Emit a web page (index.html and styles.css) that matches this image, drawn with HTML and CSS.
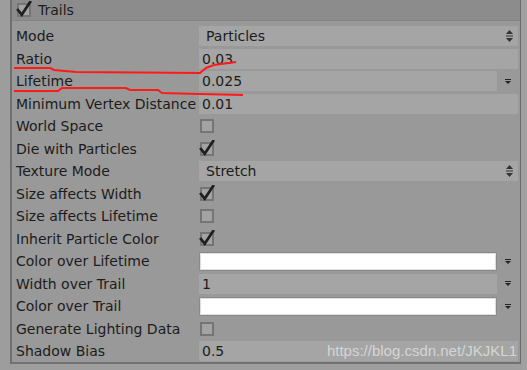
FILE: index.html
```html
<!DOCTYPE html>
<html lang="en">
<head>
    <meta charset="UTF-8">
    <title>Trails</title>
    <link rel="stylesheet" href="styles.css">
</head>
<body>
    <div class="inspector">
        <div class="gutter"></div>
        <div class="panel">
            <div class="header">
                <span class="check on"><svg viewBox="0 0 14 14"><path d="M1 7 L5 12 L13 0"/></svg></span>
                <span class="title">Trails</span>
            </div>
            <div class="rows">
                <div class="row"><span class="label">Mode</span><div class="field popup"><span>Particles</span><svg class="updown" viewBox="0 0 7 12"><path d="M3.5 0 L7 4 L0 4 Z M0 8 L7 8 L3.5 12 Z"/><rect x="0" y="5.5" width="7" height="1"/></svg></div></div>
                <div class="row"><span class="label">Ratio</span><div class="field num">0.03</div></div>
                <div class="row"><span class="label">Lifetime</span><div class="with-arrow"><div class="field num">0.025</div><svg class="arrow" viewBox="0 0 6 5"><rect width="6" height="1"/><path d="M0 2 L6 2 L3 5 Z"/></svg></div></div>
                <div class="row"><span class="label">Minimum Vertex Distance</span><div class="field num">0.01</div></div>
                <div class="row"><span class="label">World Space</span><span class="check"></span></div>
                <div class="row"><span class="label">Die with Particles</span><span class="check on"><svg viewBox="0 0 14 14"><path d="M1 7 L5 12 L13 0"/></svg></span></div>
                <div class="row"><span class="label">Texture Mode</span><div class="field popup"><span>Stretch</span><svg class="updown" viewBox="0 0 7 12"><path d="M3.5 0 L7 4 L0 4 Z M0 8 L7 8 L3.5 12 Z"/><rect x="0" y="5.5" width="7" height="1"/></svg></div></div>
                <div class="row"><span class="label">Size affects Width</span><span class="check on"><svg viewBox="0 0 14 14"><path d="M1 7 L5 12 L13 0"/></svg></span></div>
                <div class="row"><span class="label">Size affects Lifetime</span><span class="check"></span></div>
                <div class="row"><span class="label">Inherit Particle Color</span><span class="check on"><svg viewBox="0 0 14 14"><path d="M1 7 L5 12 L13 0"/></svg></span></div>
                <div class="row"><span class="label">Color over Lifetime</span><div class="with-arrow"><div class="field color"></div><svg class="arrow" viewBox="0 0 6 5"><rect width="6" height="1"/><path d="M0 2 L6 2 L3 5 Z"/></svg></div></div>
                <div class="row"><span class="label">Width over Trail</span><div class="with-arrow"><div class="field num">1</div><svg class="arrow" viewBox="0 0 6 5"><rect width="6" height="1"/><path d="M0 2 L6 2 L3 5 Z"/></svg></div></div>
                <div class="row"><span class="label">Color over Trail</span><div class="with-arrow"><div class="field color"></div><svg class="arrow" viewBox="0 0 6 5"><rect width="6" height="1"/><path d="M0 2 L6 2 L3 5 Z"/></svg></div></div>
                <div class="row"><span class="label">Generate Lighting Data</span><span class="check"></span></div>
                <div class="row"><span class="label">Shadow Bias</span><div class="field num">0.5</div></div>
            </div>
        </div>
        <div class="edge"></div>
    </div>

    <svg class="marks" viewBox="0 0 527 370">
        <polyline points="14,68 50,68 54,70 76,72 200,73 206,68 214,65 236,62"/>
        <polyline points="14,91 58,91 62,88 126,88 130,90 158,90 162,93 200,94 243,95"/>
    </svg>
    <div class="watermark">https://blog.csdn.net/JKJKL1</div>
</body>
</html>
```

FILE: styles.css
```css
* {
    box-sizing: border-box;
}
body {
    margin: 0;
    background-color: #9e9e9e;
    font-family: "DejaVu Sans", Verdana, sans-serif;
    font-size: 14px;
    color: #1c1c1c;
    overflow: hidden;
}
.inspector {
    display: flex;
    height: 370px;
}
.gutter {
    width: 10px;
    background-color: #9d9d9d;
}
.panel {
    width: 511px;
    height: 364px;
    background-color: #999999;
    border-left: 2px solid #6f6f6f;
    border-right: 1px solid #6a6a6a;
    border-bottom: 2px solid #727272;
}
.edge {
    flex: 1;
    background-color: #a0a0a0;
}
.header {
    height: 21px;
    display: flex;
    align-items: center;
    gap: 7px;
    padding-left: 5px;
    background-color: #8c8c8c;
    border-bottom: 1px solid #858585;
}
.rows {
    padding-top: 4px;
    padding-right: 2px;
}
.row {
    display: grid;
    grid-template-columns: 183px 1fr;
    align-items: center;
    height: 22.5px;
    padding-left: 4px;
}
.label {
    white-space: nowrap;
}
.field {
    height: 20px;
    display: flex;
    align-items: center;
    background-color: #a5a5a5;
    white-space: nowrap;
}
.num {
    padding-left: 3px;
}
.popup {
    justify-content: space-between;
    padding: 0 5px 0 7px;
}
.updown {
    width: 7px;
    height: 12px;
    fill: #333;
}
.with-arrow {
    display: flex;
    align-items: center;
}
.with-arrow .field {
    width: 298px;
}
.arrow {
    width: 6px;
    height: 5px;
    margin-left: 8px;
    fill: #222;
}
.color {
    height: 19px;
    background-color: #ffffff;
    border: 1px solid #8a8a8a;
    box-shadow: inset 0 0 0 1px #dedede;
}
.check {
    position: relative;
    width: 14px;
    height: 14px;
    border: 2px solid #757575;
    background-color: #a3a3a3;
    margin-left: 1px;
}
.check svg {
    position: absolute;
    left: -3px;
    top: -4px;
    width: 16px;
    height: 16px;
    fill: none;
    stroke: #1f1f1f;
    stroke-width: 2.4;
}
.header .check {
    margin-left: 0;
}
.marks {
    position: absolute;
    left: 0;
    top: 0;
    width: 527px;
    height: 370px;
    fill: none;
    stroke: #ff1a1a;
    stroke-width: 2;
}
.watermark {
    position: absolute;
    right: 10px;
    top: 342px;
    font-family: "Liberation Sans", Arial, sans-serif;
    font-size: 15px;
    color: rgba(255, 255, 255, 0.55);
}
```
